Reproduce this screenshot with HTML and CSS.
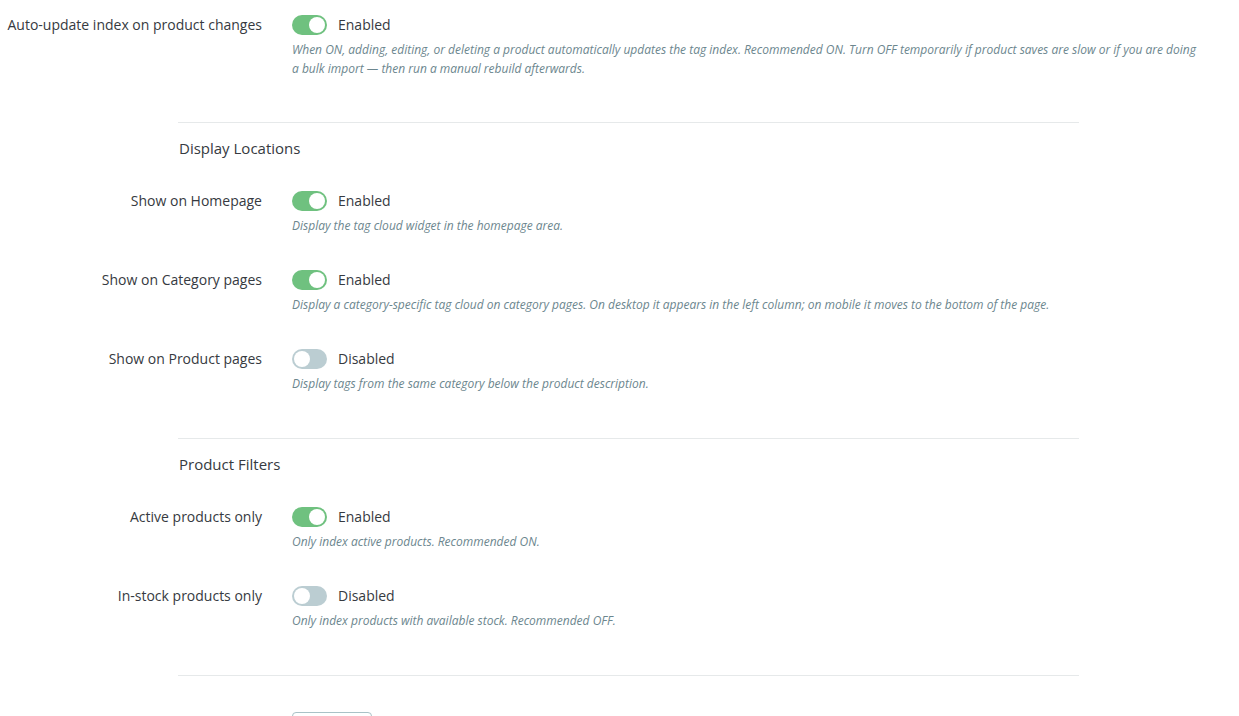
FILE: index.html
```html
<!DOCTYPE html>
<html lang="en">
<head>
<meta charset="utf-8">
<title>Tag cloud settings</title>
<link rel="stylesheet" href="styles.css">
</head>
<body>
<div class="form">
  <div class="row">
    <div class="label">Auto-update index on product changes</div>
    <div class="control">
      <div class="switch-line"><span class="switch on"></span><span class="state">Enabled</span></div>
      <p class="help">When ON, adding, editing, or deleting a product automatically updates the tag index. Recommended ON. Turn OFF temporarily if product saves are slow or if you are doing a bulk import — then run a manual rebuild afterwards.</p>
    </div>
  </div>

  <div class="section section-first">
    <h3 class="section-title">Display Locations</h3>
  </div>

  <div class="row">
    <div class="label">Show on Homepage</div>
    <div class="control">
      <div class="switch-line"><span class="switch on"></span><span class="state">Enabled</span></div>
      <p class="help">Display the tag cloud widget in the homepage area.</p>
    </div>
  </div>
  <div class="row">
    <div class="label">Show on Category pages</div>
    <div class="control">
      <div class="switch-line"><span class="switch on"></span><span class="state">Enabled</span></div>
      <p class="help">Display a category-specific tag cloud on category pages. On desktop it appears in the left column; on mobile it moves to the bottom of the page.</p>
    </div>
  </div>
  <div class="row">
    <div class="label">Show on Product pages</div>
    <div class="control">
      <div class="switch-line"><span class="switch"></span><span class="state">Disabled</span></div>
      <p class="help">Display tags from the same category below the product description.</p>
    </div>
  </div>

  <div class="section">
    <h3 class="section-title">Product Filters</h3>
  </div>

  <div class="row">
    <div class="label">Active products only</div>
    <div class="control">
      <div class="switch-line"><span class="switch on"></span><span class="state">Enabled</span></div>
      <p class="help">Only index active products. Recommended ON.</p>
    </div>
  </div>
  <div class="row">
    <div class="label">In-stock products only</div>
    <div class="control">
      <div class="switch-line"><span class="switch"></span><span class="state">Disabled</span></div>
      <p class="help">Only index products with available stock. Recommended OFF.</p>
    </div>
  </div>

  <div class="footer">
    <button class="btn" type="button" aria-label="Save"></button>
  </div>
</div>
</body>
</html>
```

FILE: styles.css
```css
html, body {
  margin: 0;
  padding: 0;
  background: #ffffff;
}
body {
  font-family: "Open Sans", "Noto Sans", sans-serif;
  color: #363a41;
  font-size: 14px;
  overflow: hidden;
  height: 716px;
}
.form {
  padding-top: 15px;
}
.row {
  display: grid;
  grid-template-columns: 262px 910px;
  column-gap: 30px;
  margin-bottom: 35px;
}
.label {
  text-align: right;
  line-height: 20px;
  font-size: 14px;
}
.control {
  display: flex;
  flex-direction: column;
}
.switch-line {
  display: flex;
  align-items: center;
  height: 20px;
}
.switch {
  position: relative;
  width: 35px;
  height: 20px;
  border-radius: 10px;
  background: #bbcdd2;
  flex: none;
}
.switch::after {
  content: "";
  position: absolute;
  top: 2px;
  left: 2px;
  width: 16px;
  height: 16px;
  border-radius: 50%;
  background: #ffffff;
}
.switch.on {
  background: #6fc17f;
}
.switch.on::after {
  left: 17px;
}
.state {
  margin-left: 11px;
  font-size: 14px;
  line-height: 20px;
}
.help {
  margin: 5px 0 0 0;
  font-size: 12px;
  line-height: 19px;
  font-style: italic;
  color: #6c868e;
}
.section {
  box-sizing: border-box;
  margin: 45px 0 33px 178px;
  width: 901px;
  border-top: 1px solid #e6e9ea;
  padding-top: 15px;
}
.section.section-first {
  margin-top: 44px;
}
.section-title {
  margin: 0;
  padding-left: 1px;
  font-size: 15px;
  font-weight: normal;
  line-height: 20px;
  color: #363a41;
}
.footer {
  box-sizing: border-box;
  margin: 45px 0 0 178px;
  width: 901px;
  border-top: 1px solid #e6e9ea;
  padding-top: 36px;
  padding-left: 114px;
}
.btn {
  width: 80px;
  height: 35px;
  border: 1px solid #a9c2c7;
  border-radius: 4px;
  background: #ffffff;
  padding: 0;
}
```
